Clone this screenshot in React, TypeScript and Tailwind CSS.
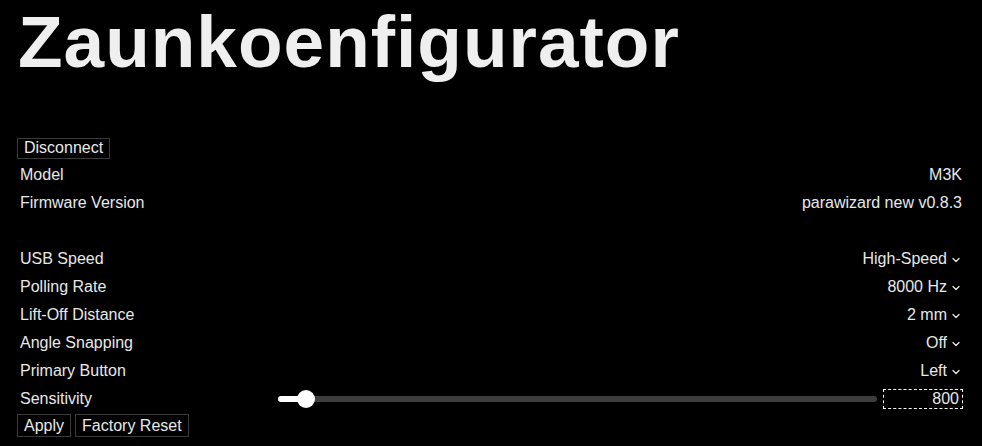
import React, { useState } from 'react';

const font = { fontFamily: '"Liberation Sans", Arial, sans-serif' };

function Chevron() {
  return (
    <svg width="8" height="6" viewBox="0 0 8 6" className="ml-[5px] mr-[2px] mt-[2px]">
      <path d="M1 1.5 L4 4.5 L7 1.5" fill="none" stroke="#e8e8e8" strokeWidth="1.3" strokeLinecap="round" strokeLinejoin="round" />
    </svg>
  );
}

function Row({ label, children }: { label: string; children?: React.ReactNode }) {
  return (
    <div className="flex h-[28px] items-center justify-between px-[4px]">
      <span>{label}</span>
      <div className="flex items-center">{children}</div>
    </div>
  );
}

function SelectValue({ value }: { value: string }) {
  return (
    <span className="flex items-center">
      {value}
      <Chevron />
    </span>
  );
}

export default function App() {
  const [sens] = useState(800);
  const pct = 4.6;

  return (
    <div className="min-h-screen bg-black text-[#e8e8e8] text-[16px] px-[16px]" style={font}>
      <h1 className="text-[73px] font-bold leading-none pt-[5px] pl-[2px] tracking-[1px] text-[#efefef]">
        Zaunkoenfigurator
      </h1>

      <div className="mt-[58px]">
        <button className="ml-[1px] border border-[#3a3a3a] px-[6px] h-[21px] leading-none">Disconnect</button>
      </div>

      <div className="mt-[1px]">
        <Row label="Model">M3K</Row>
        <Row label="Firmware Version">parawizard new v0.8.3</Row>
        <div className="h-[28px]" />
        <Row label="USB Speed"><SelectValue value="High-Speed" /></Row>
        <Row label="Polling Rate"><SelectValue value="8000 Hz" /></Row>
        <Row label="Lift-Off Distance"><SelectValue value="2 mm" /></Row>
        <Row label="Angle Snapping"><SelectValue value="Off" /></Row>
        <Row label="Primary Button"><SelectValue value="Left" /></Row>
        <div className="flex h-[28px] items-center pl-[4px] pr-[3px]">
          <span className="w-[258px]">Sensitivity</span>
          <div className="relative flex-1 h-[18px] flex items-center mr-[6px]">
            <div className="w-full h-[6px] rounded-full bg-[#3d3d3d]" />
            <div className="absolute left-0 h-[6px] rounded-full bg-white" style={{ width: `${pct}%` }} />
            <div className="absolute w-[18px] h-[18px] rounded-full bg-white" style={{ left: `calc(${pct}% - 9px)` }} />
          </div>
          <div className="w-[80px] h-[20px] border border-dashed border-white flex items-center justify-end pr-[3px]">
            {sens}
          </div>
        </div>
        <div className="flex gap-[4px] pt-[1px]">
          <button className="ml-[1px] border border-[#3a3a3a] px-[6px] h-[23px] leading-none">Apply</button>
          <button className="border border-[#3a3a3a] px-[6px] h-[23px] leading-none">Factory Reset</button>
        </div>
      </div>
    </div>
  );
}
